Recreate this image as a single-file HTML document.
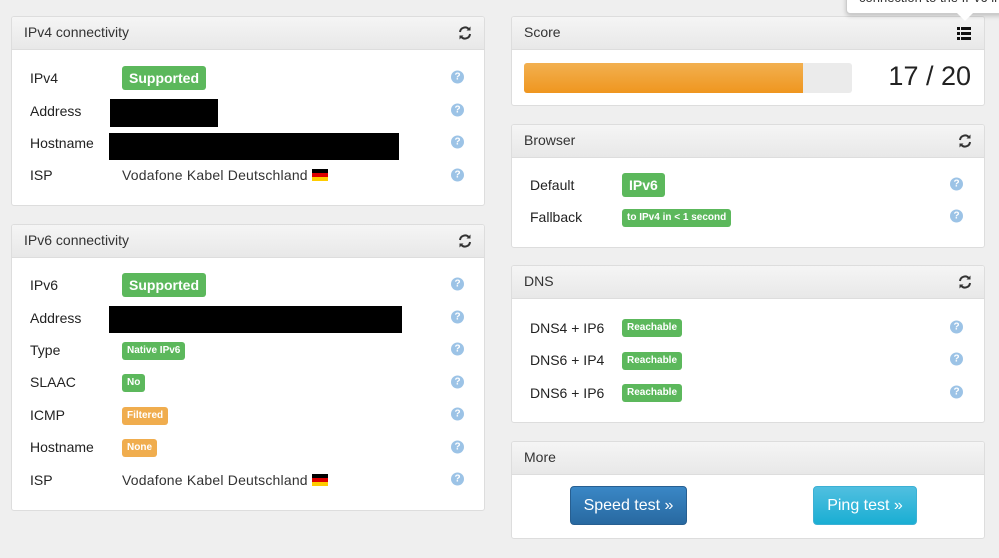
<!DOCTYPE html>
<html><head><meta charset="utf-8"><style>
*{box-sizing:border-box;margin:0;padding:0}
body{width:999px;height:558px;background:#efefef;font-family:"Liberation Sans",sans-serif;position:relative;overflow:hidden;color:#222}
.p{position:absolute;background:#fff;border:1px solid #ddd;border-radius:3px;overflow:hidden}
.h{height:33px;background:linear-gradient(#f5f5f5,#e8e8e8);border-bottom:1px solid #ddd;font-size:14px;color:#333;padding:7px 0 0 12px}
.a{position:absolute}
.l{position:absolute;font-size:14px;color:#222;transform:translateY(-50%)}
.b{position:absolute;color:#fff;font-weight:bold;border-radius:3px;transform:translateY(-50%);white-space:nowrap}
.big{font-size:14px;padding:0 7px;height:24px;line-height:24px}
.sm{font-size:10px;padding:0 5px;height:18px;line-height:18px}
.g{background:#5cb85c}.o{background:#f0ad4e}
.q{position:absolute;width:13px;height:13px;border-radius:50%;background:#9cc3e6;color:#fff;font-size:10px;font-weight:bold;text-align:center;line-height:13px;transform:translateY(-50%)}
.k{position:absolute;background:#000}
.t{font-size:14px;color:#333;letter-spacing:0.2px}
.flag{display:inline-block;width:16px;height:12px;vertical-align:-1px;margin-left:4px;background:linear-gradient(#000 33%,#d00 33%,#d00 66%,#fc0 66%)}
.btn{position:absolute;color:#fff;font-size:16px;border-radius:4px;text-align:center;line-height:38px;height:39px}
</style></head><body>

<div class="p" style="left:11px;top:16px;width:474px;height:190px">
<div class="h">IPv4 connectivity</div>
<svg class="a" style="left:445px;top:8px" width="16" height="16" viewBox="0 0 16 16"><path d="M3 7a5 5 0 0 1 9-2.5M13 9a5 5 0 0 1-9 2.5" fill="none" stroke="#333" stroke-width="2"/><path d="M13.5 1.5v4h-4z M2.5 14.5v-4h4z" fill="#333"/></svg>
</div>
<div class="l" style="left:30px;top:78px">IPv4</div><div class="b big g" style="left:122px;top:78px">Supported</div>
<div class="l" style="left:30px;top:111px">Address</div><div class="k" style="left:110px;top:99px;width:108px;height:28px"></div>
<div class="l" style="left:30px;top:143px">Hostname</div><div class="k" style="left:109px;top:133px;width:290px;height:27px"></div>
<div class="l" style="left:30px;top:175px">ISP</div><div class="l t" style="left:122px;top:175px">Vodafone Kabel Deutschland<span class="flag"></span></div>
<div class="q" style="left:451px;top:77px">?</div><div class="q" style="left:451px;top:110px">?</div><div class="q" style="left:451px;top:142px">?</div><div class="q" style="left:451px;top:175px">?</div>

<div class="p" style="left:11px;top:224px;width:474px;height:287px">
<div class="h">IPv6 connectivity</div>
<svg class="a" style="left:445px;top:8px" width="16" height="16" viewBox="0 0 16 16"><path d="M3 7a5 5 0 0 1 9-2.5M13 9a5 5 0 0 1-9 2.5" fill="none" stroke="#333" stroke-width="2"/><path d="M13.5 1.5v4h-4z M2.5 14.5v-4h4z" fill="#333"/></svg>
</div>
<div class="l" style="left:30px;top:285px">IPv6</div><div class="b big g" style="left:122px;top:285px">Supported</div>
<div class="l" style="left:30px;top:318px">Address</div><div class="k" style="left:109px;top:306px;width:293px;height:27px"></div>
<div class="l" style="left:30px;top:350px">Type</div><div class="b sm g" style="left:122px;top:351px">Native IPv6</div>
<div class="l" style="left:30px;top:382px">SLAAC</div><div class="b sm g" style="left:122px;top:383px">No</div>
<div class="l" style="left:30px;top:415px">ICMP</div><div class="b sm o" style="left:122px;top:416px">Filtered</div>
<div class="l" style="left:30px;top:447px">Hostname</div><div class="b sm o" style="left:122px;top:448px">None</div>
<div class="l" style="left:30px;top:480px">ISP</div><div class="l t" style="left:122px;top:480px">Vodafone Kabel Deutschland<span class="flag"></span></div>
<div class="q" style="left:451px;top:284px">?</div><div class="q" style="left:451px;top:317px">?</div><div class="q" style="left:451px;top:349px">?</div><div class="q" style="left:451px;top:382px">?</div><div class="q" style="left:451px;top:414px">?</div><div class="q" style="left:451px;top:447px">?</div><div class="q" style="left:451px;top:479px">?</div>

<div class="p" style="left:511px;top:16px;width:474px;height:90px">
<div class="h">Score</div>
<svg class="a" style="left:445px;top:10px" width="14" height="13" viewBox="0 0 14 13"><g fill="#111"><rect x="0" y="0" width="3" height="3"/><rect x="4" y="0" width="10" height="3"/><rect x="0" y="5" width="3" height="3"/><rect x="4" y="5" width="10" height="3"/><rect x="0" y="10" width="3" height="3"/><rect x="4" y="10" width="10" height="3"/></g></svg>
<div class="a" style="left:12px;top:46px;width:328px;height:30px;background:#ebebeb;border-radius:3px;overflow:hidden"><div style="width:279px;height:30px;background:linear-gradient(#f2b050,#ef961f)"></div></div>
<div class="a" style="right:13px;top:44px;font-size:27px;color:#222">17 / 20</div>
</div>

<div class="p" style="left:511px;top:124px;width:474px;height:124px">
<div class="h">Browser</div>
<svg class="a" style="left:445px;top:8px" width="16" height="16" viewBox="0 0 16 16"><path d="M3 7a5 5 0 0 1 9-2.5M13 9a5 5 0 0 1-9 2.5" fill="none" stroke="#333" stroke-width="2"/><path d="M13.5 1.5v4h-4z M2.5 14.5v-4h4z" fill="#333"/></svg>
</div>
<div class="l" style="left:530px;top:185px">Default</div><div class="b big g" style="left:622px;top:185px">IPv6</div>
<div class="l" style="left:530px;top:217px">Fallback</div><div class="b sm g" style="left:622px;top:218px">to IPv4 in &lt; 1 second</div>
<div class="q" style="left:950px;top:184px">?</div><div class="q" style="left:950px;top:216px">?</div>

<div class="p" style="left:511px;top:265px;width:474px;height:158px">
<div class="h">DNS</div>
<svg class="a" style="left:445px;top:8px" width="16" height="16" viewBox="0 0 16 16"><path d="M3 7a5 5 0 0 1 9-2.5M13 9a5 5 0 0 1-9 2.5" fill="none" stroke="#333" stroke-width="2"/><path d="M13.5 1.5v4h-4z M2.5 14.5v-4h4z" fill="#333"/></svg>
</div>
<div class="l" style="left:530px;top:328px">DNS4 + IP6</div><div class="b sm g" style="left:622px;top:328px">Reachable</div>
<div class="l" style="left:530px;top:360px">DNS6 + IP4</div><div class="b sm g" style="left:622px;top:361px">Reachable</div>
<div class="l" style="left:530px;top:393px">DNS6 + IP6</div><div class="b sm g" style="left:622px;top:393px">Reachable</div>
<div class="q" style="left:950px;top:327px">?</div><div class="q" style="left:950px;top:359px">?</div><div class="q" style="left:950px;top:392px">?</div>

<div class="p" style="left:511px;top:441px;width:474px;height:98px">
<div class="h">More</div>
</div>
<div class="btn" style="left:570px;top:486px;width:117px;background:linear-gradient(#3a87c6,#2869a1);border:1px solid #275f91">Speed test »</div>
<div class="btn" style="left:813px;top:486px;width:104px;background:linear-gradient(#50bfe0,#1aaed3);border:1px solid #3cb0d4">Ping test »</div>

<div class="a" style="left:846px;top:-10px;width:170px;height:24px;background:#fff;border:1px solid #ccc;border-radius:4px;box-shadow:0 2px 5px rgba(0,0,0,.2);font-size:13px;color:#333;padding:0 0 0 12px;line-height:14px;overflow:hidden;white-space:nowrap">connection to the IPv6 in</div>
<div class="a" style="left:957px;top:13px;width:0;height:0;border-left:8px solid transparent;border-right:8px solid transparent;border-top:8px solid #fff"></div>

</body></html>
